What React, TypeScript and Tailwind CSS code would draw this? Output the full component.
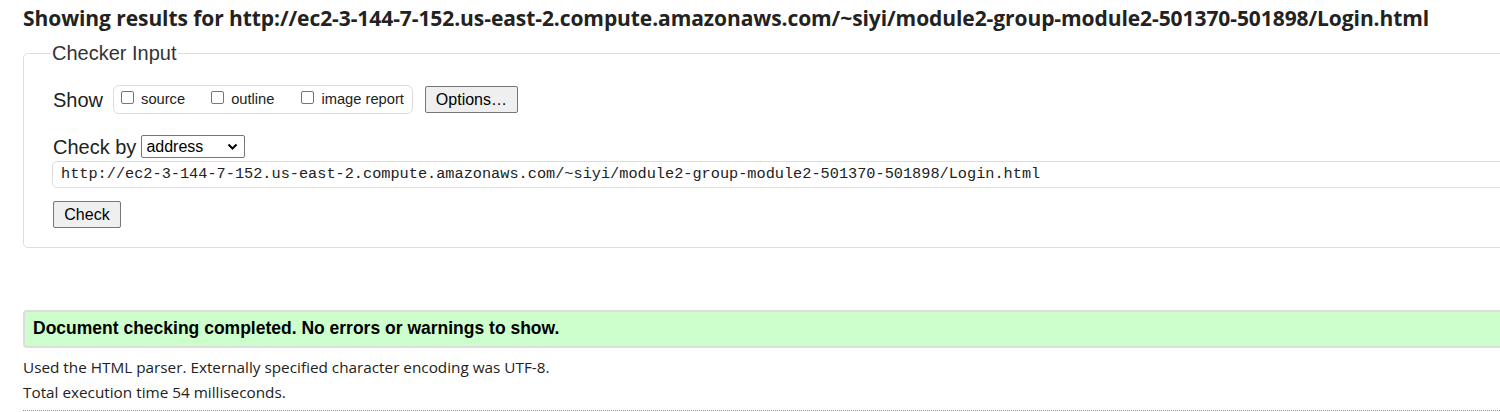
import React from 'react';

const url =
  'http://ec2-3-144-7-152.us-east-2.compute.amazonaws.com/~siyi/module2-group-module2-501370-501898/Login.html';

const Checkbox: React.FC<{ label: string; gap: string }> = ({ label, gap }) => (
  <label className={`flex items-center gap-[7px] ${gap}`}>
    <span className="mt-[-3px] w-[13px] h-[13px] border border-[#767676] rounded-[2px] bg-white" />
    <span className="text-[14.7px] leading-none text-[#222]">{label}</span>
  </label>
);

export default function App() {
  return (
    <div className="w-[1500px] h-[412px] overflow-hidden bg-white">
      <div className="w-[1700px] pl-[23px] pt-[4px]">
        {/* heading */}
        <h2 className="text-[21px] leading-[28px] font-bold text-[#222] tracking-[-0.08px] font-['Open_Sans',sans-serif]">
          Showing results for {url}
        </h2>

        {/* checker input */}
        <fieldset className="mt-[10px] border border-[#ddd] rounded-[5px] pl-[29px] pb-[19px] pt-[7px] font-['Liberation_Sans',Arial,sans-serif]">
          <legend className="ml-[-2px] px-[1px] text-[20px] leading-[22px] text-[#333]">Checker Input</legend>

          <div className="flex items-center mt-[14px]">
            <span className="text-[20px] leading-none text-[#222] mr-[10px]">Show</span>
            <div className="flex items-center h-[29px] border border-[#ddd] rounded-[6px] pl-[7px] pr-[8px]">
              <Checkbox label="source" gap="mr-[26px]" />
              <Checkbox label="outline" gap="mr-[27px]" />
              <Checkbox label="image report" gap="" />
            </div>
            <button className="ml-[12px] h-[27px] px-[10px] border border-[#767676] rounded-[2px] bg-[#efefef] text-[16px] text-black leading-none">
              Options…
            </button>
          </div>

          <div className="flex items-center mt-[21px]">
            <span className="text-[20px] leading-none text-[#222] mr-[5px]">Check by</span>
            <div className="relative w-[104px] h-[23px] border border-[#767676] rounded-[2px] bg-white flex items-center pl-[4px]">
              <span className="text-[16px] leading-none text-black">address</span>
              <svg className="absolute right-[6px] top-[7px]" width="11" height="8" viewBox="0 0 11 8">
                <path d="M1.5 1.5 L5.5 5.5 L9.5 1.5" fill="none" stroke="#000" strokeWidth="2" />
              </svg>
            </div>
          </div>

          <div className="mt-[3px] -ml-[1px] h-[27px] border border-[#ddd] rounded-[5px] flex items-center pl-[8px]">
            <span className="text-[15.26px] leading-none text-[#222] font-['Liberation_Mono','DejaVu_Sans_Mono',monospace]">
              {url}
            </span>
          </div>

          <button className="mt-[13px] h-[27px] w-[68px] border border-[#767676] rounded-[2px] bg-[#efefef] text-[16px] text-black leading-none block">
            Check
          </button>
        </fieldset>

        {/* result */}
        <div className="mt-[62px] h-[38px] border-2 border-[#ddd] rounded-[4px] bg-[#ccffcc] flex items-center pl-[8px] font-['Liberation_Sans',Arial,sans-serif]">
          <p className="text-[17.5px] font-bold text-black leading-none">
            Document checking completed. No errors or warnings to show.
          </p>
        </div>

        <div className="mt-[7px] text-[15.3px] leading-[25px] text-[#222] font-['Open_Sans',sans-serif]">
          <p>Used the HTML parser. Externally specified character encoding was UTF-8.</p>
          <p>Total execution time 54 milliseconds.</p>
        </div>

        <div className="mt-[5px] border-t border-dotted border-[#999]" />
      </div>
    </div>
  );
}
